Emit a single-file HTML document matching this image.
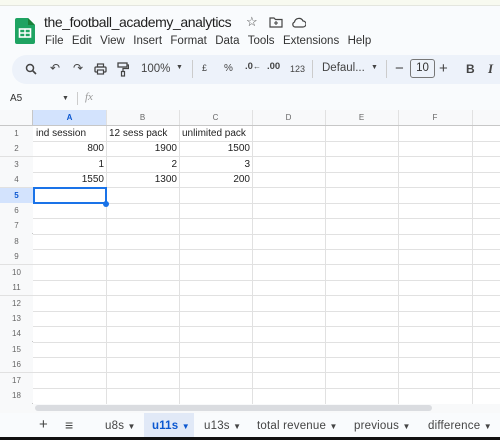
<!DOCTYPE html>
<html><head><meta charset="utf-8"><style>
*{margin:0;padding:0;box-sizing:border-box}
body{width:500px;height:440px;overflow:hidden;background:#f9fbfd;font-family:"Liberation Sans",Arial,sans-serif;position:relative;color:#444746}
.a{position:absolute;white-space:nowrap}
.grid{position:absolute;left:0;top:110px;width:500px;height:294px;background:#fff;overflow:hidden}
.vl{position:absolute;top:0;width:1px;height:294px;background:#e1e1e1}
.hl{position:absolute;left:0;width:500px;height:1px;background:#e1e1e1}
.rn{position:absolute;left:0;width:33px;text-align:center;font-size:8px;color:#666;background:#f8f9fa}
.ch{position:absolute;top:0;height:16px;text-align:center;font-size:8px;color:#666;line-height:16px;background:#f8f9fa}
.c{position:absolute;font-size:10px;color:#222;line-height:15px}
.r{text-align:right}
.tb{font-size:12px;color:#444}
.tab{position:absolute;top:413px;height:24px;line-height:26px;font-size:11.5px;color:#444;letter-spacing:0.2px}
.tab span{font-size:8px}
</style></head><body>
<div class="a" style="left:0;top:0;width:500px;height:6px;background:#f8faf0;border-bottom:1px solid #e4e6df"></div>
<svg class="a" style="left:15px;top:18px" width="20" height="26" viewBox="0 0 20 26"><path d="M2 0h11l7 7v17a2 2 0 0 1-2 2H2a2 2 0 0 1-2-2V2a2 2 0 0 1 2-2z" fill="#1ea362"/><path d="M13 0v7h7z" fill="#188038"/><rect x="4.5" y="11" width="11" height="8" fill="none" stroke="#fff" stroke-width="1.6"/><path d="M4.5 15h11M10 11v8" stroke="#fff" stroke-width="1.4"/></svg>
<div class="a" style="left:44px;top:14px;font-size:14px;letter-spacing:-0.4px;color:#1f1f1f">the_football_academy_analytics</div>
<div class="a" style="left:246px;top:14px;font-size:13px;color:#444">☆</div>
<svg class="a" style="left:269px;top:17px" width="14" height="11" viewBox="0 0 14 11"><path d="M1 1h4l1.5 1.5H13V10H1z" fill="none" stroke="#444" stroke-width="1.2"/><path d="M7 4v4M5 6h4" stroke="#444" stroke-width="1.1"/></svg>
<svg class="a" style="left:291px;top:17px" width="15" height="11" viewBox="0 0 15 11"><path d="M4 10h8a3 3 0 0 0 0-6 4.5 4.5 0 0 0-8.5 1A2.6 2.6 0 0 0 4 10z" fill="none" stroke="#444" stroke-width="1.2"/></svg>
<div class="a" style="left:45px;top:35px;font-size:11.5px;color:#333;word-spacing:5.2px">File Edit View Insert Format Data Tools Extensions Help</div>
<div class="a" style="left:12px;top:55px;width:520px;height:29px;background:#edf2fa;border-radius:15px"></div>
<svg class="a" style="left:25px;top:63px" width="12" height="12" viewBox="0 0 12 12"><circle cx="5" cy="5" r="3.5" fill="none" stroke="#444" stroke-width="1.5"/><path d="M7.5 7.5l3.5 3.5" stroke="#444" stroke-width="1.6"/></svg>
<div class="a tb" style="left:50px;top:61px">↶</div>
<div class="a tb" style="left:73px;top:61px">↷</div>
<svg class="a" style="left:94px;top:63px" width="13" height="12" viewBox="0 0 13 12"><rect x="1" y="4" width="11" height="5" rx="1" fill="none" stroke="#444" stroke-width="1.3"/><rect x="3.5" y="1" width="6" height="3" fill="none" stroke="#444" stroke-width="1.2"/><rect x="3.5" y="7" width="6" height="4" fill="#edf2fa" stroke="#444" stroke-width="1.2"/></svg>
<svg class="a" style="left:117px;top:62px" width="12" height="15" viewBox="0 0 12 15"><rect x="1" y="1" width="9" height="4" fill="none" stroke="#444" stroke-width="1.3"/><path d="M10 3h1.5v3.5H6v3" fill="none" stroke="#444" stroke-width="1.2"/><rect x="4.5" y="9.5" width="3" height="4.5" fill="none" stroke="#444" stroke-width="1.2"/></svg>
<div class="a" style="left:141px;top:63px;font-size:11.5px;color:#444">100%</div>
<div class="a" style="left:176px;top:64px;font-size:7px;color:#444">▼</div>
<div class="a" style="left:192px;top:60px;width:1px;height:18px;background:#ccc"></div>
<div class="a" style="left:202px;top:63px;font-size:9px;color:#444">£</div>
<div class="a" style="left:224px;top:63px;font-size:10px;color:#444">%</div>
<div class="a" style="left:245px;top:61px;font-size:9.5px;color:#444;font-weight:bold">.0<span style="font-size:8px">←</span></div>
<div class="a" style="left:267px;top:61px;font-size:9.5px;color:#444;font-weight:bold">.00</div>
<div class="a" style="left:290px;top:64px;font-size:9px;color:#444">123</div>
<div class="a" style="left:312px;top:60px;width:1px;height:18px;background:#ccc"></div>
<div class="a" style="left:322px;top:62px;font-size:11.5px;color:#444">Defaul...</div>
<div class="a" style="left:371px;top:64px;font-size:7px;color:#444">▼</div>
<div class="a" style="left:386px;top:60px;width:1px;height:18px;background:#ccc"></div>
<div class="a" style="left:395px;top:60px;font-size:15px;color:#444">−</div>
<div class="a" style="left:410px;top:59px;width:25px;height:19px;border:1px solid #777;border-radius:3px;font-size:11.5px;color:#333;text-align:center;line-height:17px">10</div>
<div class="a" style="left:439px;top:60px;font-size:15px;color:#444">+</div>
<div class="a" style="left:466px;top:62px;font-size:12px;font-weight:bold;color:#444">B</div>
<div class="a" style="left:488px;top:61px;font-size:13px;font-style:italic;font-weight:bold;color:#444;font-family:'Liberation Serif',serif">I</div>
<div class="a" style="left:10px;top:93px;font-size:10px;color:#333">A5</div>
<div class="a" style="left:62px;top:95px;font-size:7px;color:#444">▼</div>
<div class="a" style="left:77px;top:92px;width:1px;height:13px;background:#ccc"></div>
<div class="a" style="left:85px;top:91px;font-size:11px;font-style:italic;color:#999;font-family:'Liberation Serif',serif">fx</div>
<div class="grid">
<div class="ch" style="left:0;width:33px"></div>
<div class="ch" style="left:33px;width:73px;background:#d3e3fd;color:#0b57d0;font-weight:bold">A</div>
<div class="ch" style="left:106px;width:73px">B</div>
<div class="ch" style="left:179px;width:73px">C</div>
<div class="ch" style="left:252px;width:73px">D</div>
<div class="ch" style="left:325px;width:73px">E</div>
<div class="ch" style="left:398px;width:74px">F</div>
<div class="ch" style="left:472px;width:40px"></div>
<div class="rn" style="top:16px;height:278px"></div>
<div class="vl" style="left:32px;background:#c7c7c7"></div>
<div class="vl" style="left:106px"></div><div class="vl" style="left:179px"></div><div class="vl" style="left:252px"></div><div class="vl" style="left:325px"></div><div class="vl" style="left:398px"></div><div class="vl" style="left:472px"></div>
<div class="hl" style="top:15px;background:#c7c7c7"></div>
<div class="hl" style="top:31px"></div><div class="hl" style="top:46px"></div><div class="hl" style="top:62px"></div><div class="hl" style="top:77px"></div><div class="hl" style="top:93px"></div><div class="hl" style="top:108px"></div><div class="hl" style="top:124px"></div><div class="hl" style="top:139px"></div><div class="hl" style="top:154px"></div><div class="hl" style="top:170px"></div><div class="hl" style="top:185px"></div><div class="hl" style="top:201px"></div><div class="hl" style="top:216px"></div><div class="hl" style="top:232px"></div><div class="hl" style="top:247px"></div><div class="hl" style="top:262px"></div><div class="hl" style="top:278px"></div>
<div class="rn" style="top:16px;line-height:15px">1</div>
<div class="rn" style="top:31px;line-height:15px">2</div>
<div class="rn" style="top:47px;line-height:15px">3</div>
<div class="rn" style="top:62px;line-height:15px">4</div>
<div class="rn" style="top:78px;line-height:15px;background:#d3e3fd;color:#0b57d0;font-weight:bold">5</div>
<div class="rn" style="top:93px;line-height:15px">6</div>
<div class="rn" style="top:108px;line-height:15px">7</div>
<div class="rn" style="top:124px;line-height:15px">8</div>
<div class="rn" style="top:139px;line-height:15px">9</div>
<div class="rn" style="top:155px;line-height:15px">10</div>
<div class="rn" style="top:170px;line-height:15px">11</div>
<div class="rn" style="top:186px;line-height:15px">12</div>
<div class="rn" style="top:201px;line-height:15px">13</div>
<div class="rn" style="top:216px;line-height:15px">14</div>
<div class="rn" style="top:232px;line-height:15px">15</div>
<div class="rn" style="top:247px;line-height:15px">16</div>
<div class="rn" style="top:263px;line-height:15px">17</div>
<div class="rn" style="top:278px;line-height:15px">18</div>
<div class="c" style="left:36px;top:16px">ind session</div>
<div class="c" style="left:109px;top:16px">12 sess pack</div>
<div class="c" style="left:182px;top:16px">unlimited pack</div>
<div class="c r" style="left:33px;width:71px;top:31px">800</div>
<div class="c r" style="left:106px;width:71px;top:31px">1900</div>
<div class="c r" style="left:179px;width:71px;top:31px">1500</div>
<div class="c r" style="left:33px;width:71px;top:47px">1</div>
<div class="c r" style="left:106px;width:71px;top:47px">2</div>
<div class="c r" style="left:179px;width:71px;top:47px">3</div>
<div class="c r" style="left:33px;width:71px;top:62px">1550</div>
<div class="c r" style="left:106px;width:71px;top:62px">1300</div>
<div class="c r" style="left:179px;width:71px;top:62px">200</div>
<div class="a" style="left:33px;top:77px;width:74px;height:17px;border:2px solid #1a73e8"></div>
<div class="a" style="left:103px;top:91px;width:6px;height:6px;border-radius:50%;background:#1a73e8"></div>
</div>
<div class="a" style="left:0;top:404px;width:500px;height:9px;background:#f8f9fa"></div>
<div class="a" style="left:35px;top:405px;width:397px;height:6px;border-radius:3px;background:#dadce0"></div>
<div class="a" style="left:144px;top:413px;width:50px;height:24px;background:#e1e9f7"></div>
<div class="tab" style="left:39px;font-size:15px;line-height:24px">+</div>
<div class="tab" style="left:65px;font-size:14px;line-height:24px">≡</div>
<div class="tab" style="left:105px">u8s <span>▼</span></div>
<div class="tab" style="left:152px;color:#0b57d0;font-weight:bold">u11s <span>▼</span></div>
<div class="tab" style="left:204px">u13s <span>▼</span></div>
<div class="tab" style="left:257px">total revenue <span>▼</span></div>
<div class="tab" style="left:354px">previous <span>▼</span></div>
<div class="tab" style="left:428px">difference <span>▼</span></div>
<div class="a" style="left:0;top:437px;width:500px;height:3px;background:#111"></div>
</body></html>
